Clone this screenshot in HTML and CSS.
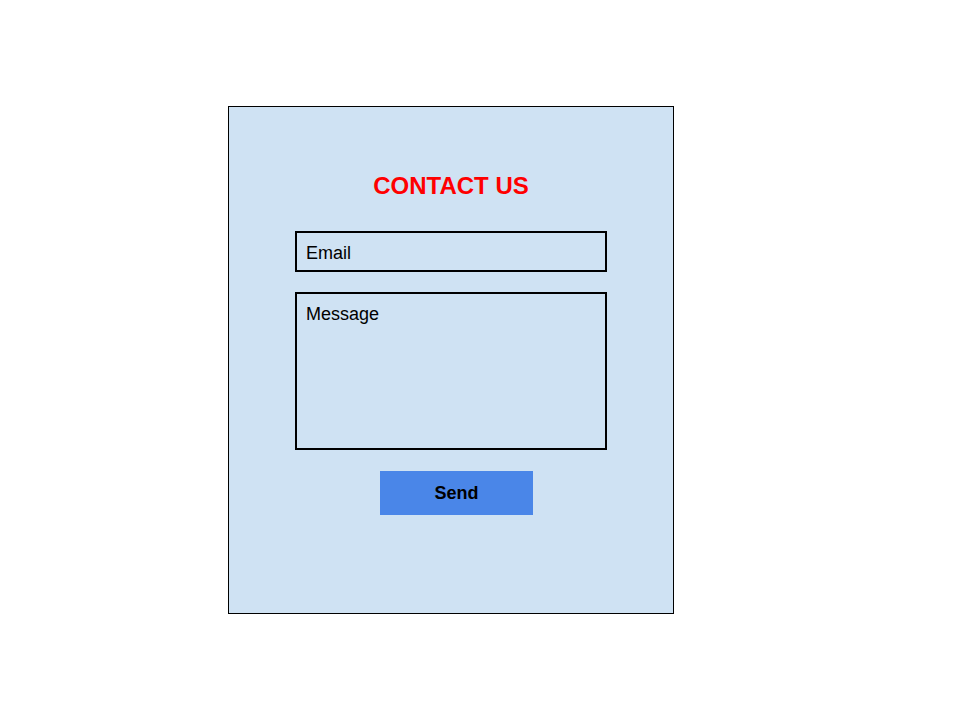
FILE: index.html
```html
<!DOCTYPE html>
<html>
<head>
<meta charset="utf-8">
<link rel="stylesheet" href="styles.css">
</head>
<body>
<div class="page">
  <form class="panel">
    <h1 class="title">CONTACT US</h1>
    <div class="field field-email">Email</div>
    <div class="field field-message">Message</div>
    <div class="actions"><button type="button" class="send">Send</button></div>
  </form>
</div>
</body>
</html>
```
FILE: styles.css
```css
html, body {
  margin: 0;
  padding: 0;
  background: #ffffff;
}
.page {
  padding: 106px 0 0 228px;
  font-family: "Liberation Sans", Arial, sans-serif;
}
.panel {
  box-sizing: border-box;
  width: 446px;
  height: 508px;
  background: #cfe2f3;
  border: 1px solid #000;
  padding: 65px 66px 0 66px;
  display: flex;
  flex-direction: column;
  margin: 0;
}
.title {
  margin: 0 0 31px 0;
  text-align: center;
  color: #ff0000;
  font-size: 24px;
  line-height: 28px;
  font-weight: bold;
}
.field {
  box-sizing: border-box;
  border: 2px solid #000;
  font-size: 18px;
  line-height: 21px;
  padding: 10px 9px 6px 9px;
  color: #000;
}
.field-email {
  height: 41px;
  margin-bottom: 20px;
}
.field-message {
  height: 158px;
  padding-top: 10px;
}
.actions {
  padding: 21px 0 0 85px;
}
.send {
  display: block;
  width: 153px;
  height: 44px;
  border: none;
  background: #4a86e8;
  color: #000;
  font-family: "Liberation Sans", Arial, sans-serif;
  font-size: 18px;
  font-weight: bold;
  padding: 0;
}
```
